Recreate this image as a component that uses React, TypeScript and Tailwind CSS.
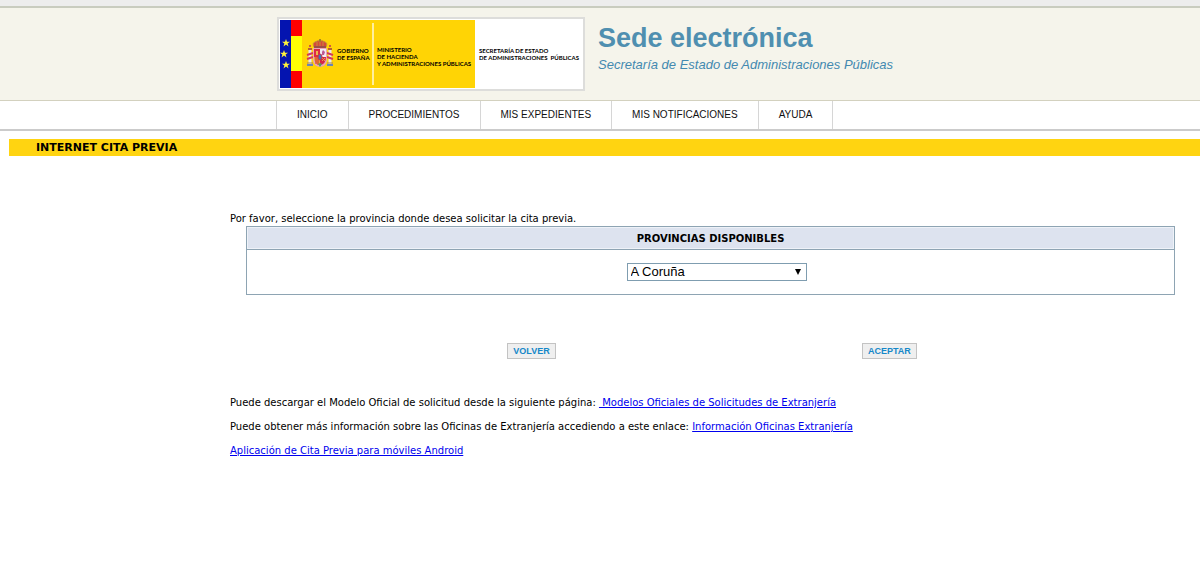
import React from 'react';

// ============================================================================
// DATA
// ============================================================================

const NAV_ITEMS = ['INICIO', 'PROCEDIMIENTOS', 'MIS EXPEDIENTES', 'MIS NOTIFICACIONES', 'AYUDA'];

const PROVINCES = ['A Coruña', 'Albacete', 'Alicante', 'Almería', 'Araba', 'Asturias', 'Ávila'];

const STAR = 'M0 -4L1 -1.3L4 -1.3L1.6 0.5L2.5 3.4L0 1.6L-2.5 3.4L-1.6 0.5L-4 -1.3L-1 -1.3Z';

// ============================================================================
// LOGO
// ============================================================================

function Flags() {
  return (
    <svg className="shrink-0" width="22" height="68" viewBox="0 0 22 68" aria-hidden="true">
      <rect width="11" height="68" fill="#0414b0" />
      <rect x="11" width="11" height="68" fill="#fe0000" />
      <rect x="11" y="16" width="11" height="35" fill="#ffff04" />
      <g fill="#fff33b">
        <path d={STAR} transform="translate(6 23)" />
        <path d={STAR} transform="translate(4 34)" />
        <path d={STAR} transform="translate(6 45)" />
      </g>
    </svg>
  );
}

function CoatOfArms() {
  return (
    <svg className="shrink-0" width="28" height="30" viewBox="0 0 28 30" aria-hidden="true">
      {/* Crown */}
      <path d="M8 8Q6 4 9 3Q12 1 14 2Q16 1 19 3Q22 4 20 8Z" fill="#d5483a" />
      <path d="M8 8Q6 4 9 3Q12 1 14 2Q16 1 19 3Q22 4 20 8M11 7V3M14 7V2M17 7V3" fill="none" stroke="#c4903a" strokeWidth="1" />
      <path d="M14 0V3M13 1H15" stroke="#8b6a30" strokeWidth="1" />
      <rect x="8" y="7" width="12" height="2" fill="#9b4e49" />
      {/* Pillars */}
      <path d="M4 11V25M24 11V25" stroke="#e9e6ee" strokeWidth="3" />
      <path d="M2 10H6M22 10H26" stroke="#b75f34" strokeWidth="2" />
      <path d="M3 7H5M23 7H25" stroke="#d05546" strokeWidth="2" />
      <path d="M1 16L7 14M1 20L7 18M21 14L27 16M21 18L27 20" stroke="#d2395b" strokeWidth="2" />
      <path d="M1 26H7M21 26H27" stroke="#6b86b4" strokeWidth="2" />
      <path d="M1 24H7M21 24H27" stroke="#a8834e" strokeWidth="1" />
      {/* Shield */}
      <path d="M7 9H21V20Q21 27 14 28Q7 27 7 20Z" fill="#e9a5b8" />
      <path d="M8 10H14V18H8Z" fill="#dc2b43" />
      <path d="M10 16V12H12V16Z" fill="#e9b84d" />
      <path d="M14 10H20V18H14Z" fill="#f2ecf5" />
      <path d="M16 16V13L17 11L19 13L18 16Z" fill="#bc5a94" />
      <path d="M8 18H14V26Q8 25 8 18Z" fill="#e9a231" />
      <path d="M10 18V25M12 18V26" stroke="#d42c3a" strokeWidth="1" />
      <path d="M14 18H20Q20 25 14 26Z" fill="#d82645" />
      <path d="M16 19L19 22M19 19L16 22" stroke="#e6a14b" strokeWidth="1" />
      <ellipse cx="14" cy="18" rx="2" ry="3" fill="#3f78b5" stroke="#cf3344" strokeWidth="1" />
      <path d="M12 25L14 24L16 25L14 28Z" fill="#5b9a61" />
    </svg>
  );
}

function GovernmentLogo() {
  return (
    <div className="flex border-2 border-[#dddddb] bg-white p-px font-[Lato,sans-serif] text-[6px] leading-[7px] font-bold whitespace-nowrap text-black">
      <div className="flex h-[68px] bg-[#ffd405]">
        <Flags />
        <div className="flex w-[70px] items-center gap-[3px] pl-1">
          <CoatOfArms />
          <p>GOBIERNO<br />DE ESPAÑA</p>
        </div>
        <div className="my-[3px] w-0.5 bg-[#ffef9e]" />
        <p className="w-[101px] self-center pt-1 pl-[3px]">
          MINISTERIO<br />DE HACIENDA<br />Y ADMINISTRACIONES PÚBLICAS
        </p>
      </div>
      <p className="w-[107px] self-center pl-1">
        SECRETARÍA DE ESTADO<br />DE ADMINISTRACIONES&nbsp; PÚBLICAS
      </p>
    </div>
  );
}

// ============================================================================
// HEADER
// ============================================================================

function SiteHeader() {
  return (
    <header className="font-['Liberation_Sans',Arial,sans-serif]">
      <div className="h-2 border-b-2 border-[#c9ccbf] bg-[#ededed]" />
      <div className="flex items-start gap-[13px] border-b border-[#d3d1bf] bg-[#f5f4eb] pt-[9px] pb-[9px] pl-[277px]">
        <GovernmentLogo />
        <div className="pt-1 text-[#4f8fb0]">
          <h1 className="text-[27px] leading-[34px] font-bold">Sede electrónica</h1>
          <p className="text-[13px] leading-5 text-[#4389b0] italic">
            Secretaría de Estado de Administraciones Públicas
          </p>
        </div>
      </div>
      <nav className="flex border-b-2 border-[#cbcbcb] pl-[276px]">
        {NAV_ITEMS.map(item => (
          <a
            key={item}
            href="#"
            className="border-r border-[#d6d6d6] px-5 text-[10px] leading-7 text-[#111111] first:border-l"
          >
            {item}
          </a>
        ))}
      </nav>
    </header>
  );
}

// ============================================================================
// MAIN COMPONENT
// ============================================================================

export default function App() {
  return (
    <div className="min-h-screen bg-white text-black">
      <SiteHeader />
      <main className="pt-2 font-['DejaVu_Sans',Verdana,sans-serif] text-[10px]">
        <h2 className="ml-[9px] bg-[#ffd411] pl-[27px] text-[11px] leading-[17px] font-bold">
          INTERNET CITA PREVIA
        </h2>

        <form className="mt-14 mr-[25px] ml-[230px]" onSubmit={e => e.preventDefault()}>
          <label htmlFor="provincia" className="block leading-[14px]">
            Por favor, seleccione la provincia donde desea solicitar la cita previa.
          </label>
          <table className="ml-4 w-[calc(100%-16px)] border-collapse border border-[#8ea4b3]">
            <thead>
              <tr>
                <th className="h-[23px] border border-[#8ea4b3] bg-[#dde3ef] font-bold shadow-[inset_0_0_0_1px_#eef2f8]">
                  PROVINCIAS DISPONIBLES
                </th>
              </tr>
            </thead>
            <tbody>
              <tr>
                <td className="h-[45px] p-0 pl-3">
                  <div className="relative mx-auto w-[180px]">
                    <select
                      id="provincia"
                      className="block h-[18px] w-full appearance-none border border-[#7f9db0] bg-white pl-[3px] font-['Liberation_Sans',Arial,sans-serif] text-[13px] leading-4"
                    >
                      {PROVINCES.map(name => (
                        <option key={name}>{name}</option>
                      ))}
                    </select>
                    <svg className="pointer-events-none absolute top-1.5 right-1.5" width="6" height="6" viewBox="0 0 6 6" aria-hidden="true">
                      <path d="M0 0H6L3 6Z" fill="#000" />
                    </svg>
                  </div>
                </td>
              </tr>
            </tbody>
          </table>

          <div className="mt-12 grid grid-cols-[603px_1fr] font-['Liberation_Sans',Arial,sans-serif] text-[9px] font-bold text-[#1688c9]">
            <button type="button" className="h-4 justify-self-center border border-[#c3c3c3] bg-[#efefef] px-[5px] leading-[14px]">
              VOLVER
            </button>
            <button type="submit" className="ml-[29px] h-4 justify-self-start border border-[#c3c3c3] bg-[#efefef] px-[5px] leading-[14px]">
              ACEPTAR
            </button>
          </div>
        </form>

        <div className="mt-9 ml-[230px] space-y-2 leading-4">
          <p>
            Puede descargar el Modelo Oficial de solicitud desde la siguiente página:{' '}
            <a href="#" className="text-[#0000ee] underline">&nbsp;Modelos Oficiales de Solicitudes de Extranjería</a>
          </p>
          <p>
            Puede obtener más información sobre las Oficinas de Extranjería accediendo a este enlace:{' '}
            <a href="#" className="text-[#0000ee] underline">Información Oficinas Extranjería</a>
          </p>
          <p>
            <a href="#" className="text-[#0000ee] underline">Aplicación de Cita Previa para móviles Android</a>
          </p>
        </div>
      </main>
    </div>
  );
}
